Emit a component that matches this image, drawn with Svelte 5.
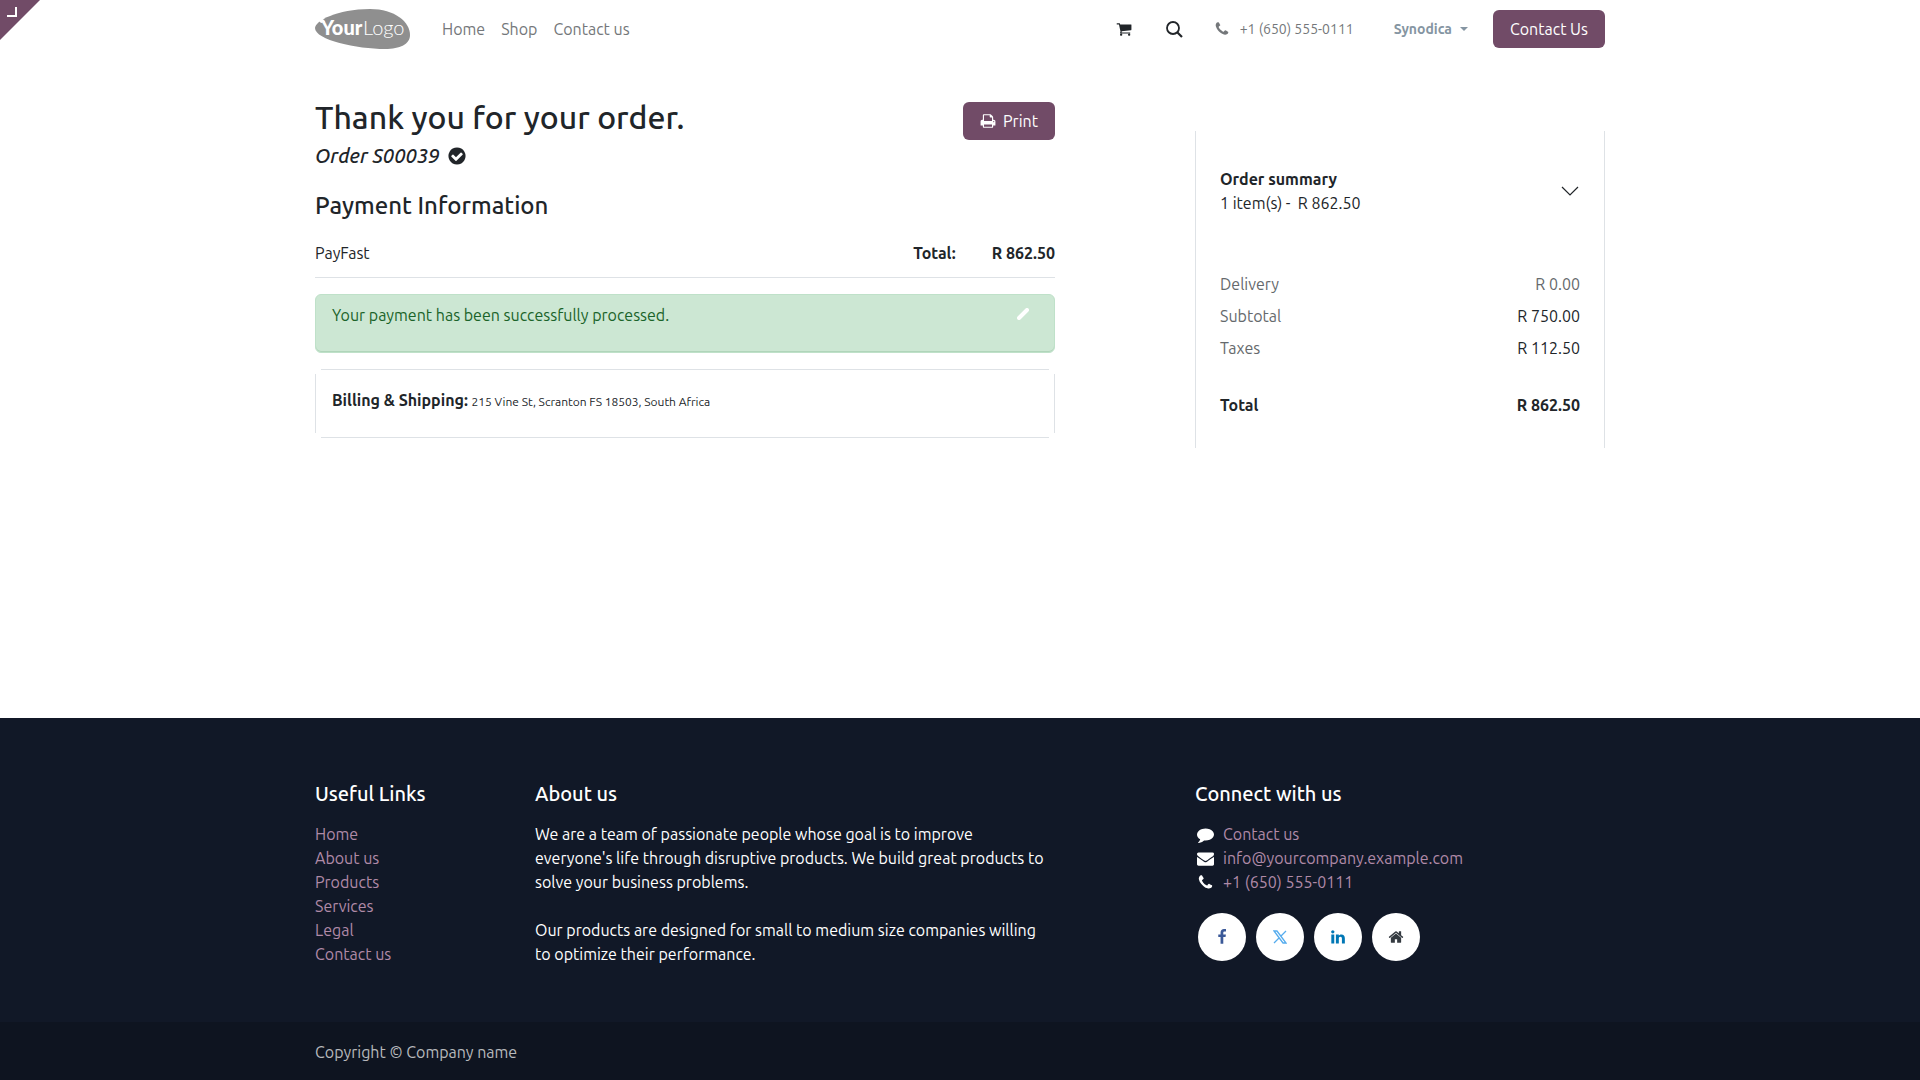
<script>
  const navLinks = ['Home', 'Shop', 'Contact us'];
  const usefulLinks = ['Home', 'About us', 'Products', 'Services', 'Legal', 'Contact us'];

  const icons = {
    cart: 'M704 1536q0 52-38 90t-90 38-90-38-38-90 38-90 90-38 90 38 38 90zm896 0q0 52-38 90t-90 38-90-38-38-90 38-90 90-38 90 38 38 90zm128-1088v512q0 24-16.5 42.5t-40.5 21.5l-1044 122q13 60 13 70 0 16-24 64h920q26 0 45 19t19 45-19 45-45 19h-1024q-26 0-45-19t-19-45q0-11 8-31.5t16-36 21.5-40 15.5-29.5l-177-823h-204q-26 0-45-19t-19-45 19-45 45-19h256q16 0 28.5 6.5t19.5 15.5 13 24.5 8 26 5.5 29.5 4.5 26h1201q26 0 45 19t19 45z',
    phone: 'M1600 1240q0 27-10 70.5t-21 68.5q-21 50-122 106-94 51-186 51-27 0-53-3.5t-57.5-12.5-47-14.5-55.5-20.5-49-18q-98-35-175-83-127-79-264-216t-216-264q-48-77-83-175-3-9-18-49t-20.5-55.5-14.5-47-12.5-57.5-3.5-53q0-92 51-186 56-101 106-122 25-11 68.5-21t70.5-10q14 0 21 3 18 6 53 76 11 19 30 54t35 63.5 31 53.5q3 4 17.5 25t21.5 35.5 7 28.5q0 20-28.5 50t-62 55-62 53-28.5 46q0 9 5 22.5t8.5 20.5 14 24 11.5 19q76 137 174 235t235 174q2 1 19 11.5t24 14 20.5 8.5 22.5 5q18 0 46-28.5t53-62 55-62 50-28.5q14 0 28.5 7t35.5 21.5 25 17.5q25 15 53.5 31t63.5 35 54 30q70 35 76 53 3 7 3 21z',
    print: 'M448 1536h896v-256h-896v256zm0-640h896v-384h-160q-40 0-68-28t-28-68v-160h-640v640zm1152 64q0-26-19-45t-45-19-45 19-19 45 19 45 45 19 45-19 19-45zm128 0v416q0 13-9.5 22.5t-22.5 9.5h-224v160q0 40-28 68t-68 28h-960q-40 0-68-28t-28-68v-160h-224q-13 0-22.5-9.5t-9.5-22.5v-416q0-79 56.5-135.5t135.5-56.5h64v-544q0-40 28-68t68-28h672q40 0 88 20t76 48l152 152q28 28 48 76t20 88v256h64q79 0 135.5 56.5t56.5 135.5z',
    check: 'M1412 734q0-28-18-46l-91-90q-19-19-45-19t-45 19l-408 407-226-226q-19-19-45-19t-45 19l-91 90q-18 18-18 46 0 27 18 45l362 362q19 19 45 19 27 0 46-19l543-543q18-18 18-45zm252 162q0 209-103 385.5t-279.5 279.5-385.5 103-385.5-103-279.5-279.5-103-385.5 103-385.5 279.5-279.5 385.5-103 385.5 103 279.5 279.5 103 385.5z',
    comment: 'M1792 896q0 174-120 321.5t-326 233-450 85.5q-70 0-145-8-198 175-460 242-49 14-114 22-17 2-30.5-9t-17.5-29v-1q-3-4-.5-12t2-10 4.5-9.5l6-9 7-8.5 8-9q7-8 31-34.5t34.5-38 31-39.5 32.5-51 27-59 26-76q-157-89-247.5-220t-90.5-281q0-130 71-248.5t191-204.5 286-136.5 348-50.5q244 0 450 85.5t326 233 120 321.5z',
    envelope: 'M1792 710v794q0 66-47 113t-113 47h-1472q-66 0-113-47t-47-113v-794q44 49 101 87 362 246 497 345 57 42 92.5 65.5t94.5 48 110 24.5h2q51 0 110-24.5t94.5-48 92.5-65.5q170-123 498-345 57-39 100-87zm0-294q0 79-49 151t-122 123q-376 261-468 325-10 7-42.5 31t-54 38.5-52 32.5-57.5 27-50 9h-2q-23 0-50-9t-57.5-27-52-32.5-54-38.5-42.5-31q-91-64-262-182.5t-205-142.5q-62-42-117-115.5t-55-136.5q0-78 41.5-130t118.5-52h1472q65 0 112.5 47t47.5 113z',
    facebook: 'M1343 12v264h-157q-86 0-116 36t-30 108v189h293l-39 296h-254v759h-306v-759h-255v-296h255v-218q0-186 104-288.5t277-102.5q147 0 228 12z',
    linkedin: 'M477 625v991h-330v-991h330zm21-306q1 73-50.5 122t-135.5 49h-2q-82 0-132-49t-50-122q0-74 51.5-122.5t134.5-48.5 133 48.5 51 122.5zm1166 729v568h-329v-530q0-105-40.5-164.5t-126.5-59.5q-63 0-105.5 34.5t-63.5 85.5q-11 30-11 81v553h-329q2-399 2-647t-1-296l-1-48h329v144h-2q20-32 41-56t56.5-52 87-43.5 114.5-15.5q171 0 275 113.5t104 332.5z',
    home: 'M1472 992v480q0 26-19 45t-45 19h-384v-384h-256v384h-384q-26 0-45-19t-19-45v-480q0-1 .5-3t.5-3l575-474 575 474q1 2 1 6zm223-69l-62 74q-8 9-21 11h-3q-13 0-21-7l-692-577-692 577q-12 8-24 7-13-2-21-11l-62-74q-8-10-7-23.5t11-21.5l719-599q32-26 76-26t76 26l244 204v-195q0-14 9-23t23-9h192q14 0 23 9t9 23v408l219 182q10 8 11 21.5t-7 23.5z'
  };
</script>

{#snippet icon(name, size = 16)}
  <svg class="icon" width={size} height={size} viewBox="0 0 1792 1792" aria-hidden="true">
    <path d={icons[name]} fill="currentColor" />
  </svg>
{/snippet}

<div class="page">
  <a href="#backend" class="corner" aria-label="Go to backend">
    <svg width="40" height="40" viewBox="0 0 40 40">
      <path d="M0 0H40L0 40z" fill="#714b67" />
      <path d="M7 16H16V7" fill="none" stroke="#fff" stroke-width="2" />
    </svg>
  </a>

  <header class="container">
    <a href="#home" class="logo" aria-label="Your Logo">
      <svg width="95" height="40" viewBox="0 0 95 40">
        <path d="M0 19C0 12 22 0 55 0C80 0 95 13 95 26C95 35 85 40 70 40C42 40 0 31 0 19z" fill="#8f8f8f" />
        <path d="M3 11l5-1 2 3-4 1z" fill="#fff" />
        <text x="6" y="26" font-size="20" font-weight="900" fill="#fff">Your</text>
        <text x="48" y="26" font-size="20" font-weight="300" fill="#fff">Logo</text>
      </svg>
    </a>
    <nav>
      {#each navLinks as link}
        <a href="#{link}">{link}</a>
      {/each}
    </nav>
    <a href="#cart" class="tool" aria-label="Cart">{@render icon('cart')}</a>
    <button class="tool search" aria-label="Search">
      <svg width="17" height="17" viewBox="0 0 17 17" fill="none" stroke="currentColor">
        <circle cx="7" cy="7" r="6" stroke-width="1.8" />
        <path d="M11 11l5 5" stroke-width="2.2" />
      </svg>
    </button>
    <a href="#call" class="call">{@render icon('phone')}<span>+1 (650) 555-0111</span></a>
    <button class="user">Synodica <span class="caret"></span></button>
    <a href="#contact" class="btn">Contact Us</a>
  </header>

  <main class="container columns">
    <div class="order">
      <div class="heading">
        <div>
          <h1>Thank you for your order.</h1>
          <p class="order-name"><em>Order S00039</em> {@render icon('check', 20)}</p>
        </div>
        <button class="btn print">{@render icon('print')}Print</button>
      </div>

      <h2>Payment Information</h2>
      <div class="payment">
        <span>PayFast</span>
        <strong class="label">Total:</strong>
        <strong>R 862.50</strong>
      </div>

      <div class="alert" role="status">
        <span>Your payment has been successfully processed.</span>
        <button class="edit" aria-label="Edit">
          <svg width="12" height="12" viewBox="0 0 12 12">
            <path d="M2 10L10 2" stroke="#fff" stroke-width="4" stroke-linecap="round" />
          </svg>
        </button>
      </div>

      <div class="address card">
        <strong>Billing &amp; Shipping:</strong>
        <small>215 Vine St, Scranton FS 18503, South Africa</small>
      </div>
    </div>

    <aside class="summary card">
      <button class="toggle">
        <span><strong>Order summary</strong><br>1 item(s) -&nbsp; R 862.50</span>
        <svg width="18" height="10" viewBox="0 0 18 10" fill="none" stroke="currentColor" stroke-width="1.2">
          <path d="M1 1l8 8 8-8" />
        </svg>
      </button>
      <table>
        <tbody>
          <tr class="muted"><th>Delivery</th><td>R 0.00</td></tr>
          <tr><th>Subtotal</th><td>R 750.00</td></tr>
          <tr><th>Taxes</th><td>R 112.50</td></tr>
          <tr class="total"><th>Total</th><td>R 862.50</td></tr>
        </tbody>
      </table>
    </aside>
  </main>

  <footer>
    <div class="container columns">
      <section>
        <h3>Useful Links</h3>
        <ul>
          {#each usefulLinks as link}
            <li><a href="#{link}">{link}</a></li>
          {/each}
        </ul>
      </section>
      <section class="about">
        <h3>About us</h3>
        <p>
          We are a team of passionate people whose goal is to improve<br>
          everyone's life through disruptive products. We build great products to
          solve your business problems.
        </p>
        <p>
          Our products are designed for small to medium size companies willing
          to optimize their performance.
        </p>
      </section>
      <section class="connect">
        <h3>Connect with us</h3>
        <ul>
          <li>{@render icon('comment', 17)}<a href="#contact">Contact us</a></li>
          <li>{@render icon('envelope', 17)}<a href="#mail">info@yourcompany.example.com</a></li>
          <li>{@render icon('phone', 17)}<a href="#call">+1 (650) 555-0111</a></li>
        </ul>
        <div class="social">
          <a href="#facebook" class="facebook" aria-label="Facebook">{@render icon('facebook')}</a>
          <a href="#x" class="x" aria-label="X">
            <svg width="14" height="14" viewBox="0 0 14 14" fill="none" stroke="currentColor" stroke-width="1.3">
              <path d="M1 1H4L13 13H10zM13 1L8 6M6 8L1 13" />
            </svg>
          </a>
          <a href="#linkedin" class="linkedin" aria-label="LinkedIn">{@render icon('linkedin')}</a>
          <a href="#home" class="home" aria-label="Home">{@render icon('home')}</a>
        </div>
      </section>
    </div>
    <div class="copyright">
      <div class="container">Copyright © Company name</div>
    </div>
  </footer>
</div>

<style>
  :global(body) {
    margin: 0;
  }

  .page {
    display: flex;
    flex-direction: column;
    min-height: 100vh;
    background: #fff;
    color: #212529;
    font: 16px/24px Ubuntu, 'Open Sans', 'Noto Sans', sans-serif;
  }

  .container {
    box-sizing: border-box;
    width: 100%;
    max-width: 1320px;
    margin: 0 auto;
    padding: 0 15px;
  }

  .columns {
    display: grid;
    grid-template-columns: repeat(12, minmax(0, 1fr));
    column-gap: 30px;
  }

  a {
    color: inherit;
    text-decoration: none;
  }

  button {
    padding: 0;
    border: 0;
    background: none;
    color: inherit;
    font: inherit;
    text-align: left;
    cursor: pointer;
  }

  h1, h2, h3, p, ul {
    margin: 0;
    padding: 0;
    font-weight: 500;
  }

  p, ul {
    font-weight: 400;
    list-style: none;
  }

  strong {
    font-weight: 700;
  }

  svg {
    display: block;
    flex: none;
  }

  .corner {
    position: absolute;
    top: 0;
    left: 0;
  }

  header {
    display: flex;
    align-items: center;
    height: 58px;
  }

  .logo {
    margin-right: 32px;
    font-family: Lato, sans-serif;
  }

  nav {
    display: flex;
    flex: 1;
    gap: 16px;
    color: #74777a;
  }

  .tool {
    margin-right: 34px;
  }

  .search {
    margin-right: 31px;
  }

  .call {
    display: flex;
    align-items: center;
    gap: 10px;
    margin-right: 40px;
    color: #74777a;
    font-size: 14px;
  }

  .user {
    display: flex;
    align-items: center;
    gap: 8px;
    margin-right: 25px;
    color: #8595a2;
    font-size: 14px;
    font-weight: 700;
  }

  .caret {
    border: 4px solid transparent;
    border-top-color: currentColor;
    border-bottom: 0;
  }

  .btn {
    padding: 7px 17px;
    border-radius: 6px;
    background: #714b67;
    color: #fff;
  }

  .order {
    grid-column: span 7;
    padding-top: 39px;
  }

  .heading {
    display: flex;
    align-items: flex-start;
    justify-content: space-between;
  }

  h1 {
    font-size: 32px;
    line-height: 40px;
  }

  .order-name {
    display: flex;
    align-items: center;
    gap: 7px;
    height: 38px;
    font-size: 20px;
    font-weight: 500;
  }

  .print {
    display: flex;
    align-items: center;
    gap: 7px;
    margin-top: 5px;
  }

  h2 {
    margin-top: 16px;
    font-size: 24px;
    line-height: 30px;
  }

  .payment {
    display: flex;
    margin-top: 20px;
    padding-bottom: 12px;
    border-bottom: 1px solid #dee2e6;
  }

  .label {
    margin: 0 36px 0 auto;
  }

  .alert {
    display: flex;
    align-items: flex-start;
    justify-content: space-between;
    box-sizing: border-box;
    height: 59px;
    margin-top: 16px;
    padding: 8px 25px 8px 16px;
    border: 1px solid #bfe1c9;
    border-radius: 6px;
    background: #cce7d3;
    box-shadow: inset 0 -1px #b0d5ba;
    color: #1a6329;
  }

  .edit {
    margin-top: 5px;
  }

  /* the border strokes stop short of the corners */
  .card {
    position: relative;
  }

  .card::before {
    content: '';
    position: absolute;
    inset: 5px 0;
    border: solid #dee2e6;
    border-width: 0 1px;
    pointer-events: none;
  }

  .address {
    margin-top: 16px;
    padding: 19px 17px 24px;
  }

  .address::after {
    content: '';
    position: absolute;
    inset: 0 6px;
    border: solid #dee2e6;
    border-width: 1px 0;
    pointer-events: none;
  }

  small {
    font-size: 12px;
  }

  .summary {
    grid-column: 9 / span 4;
    align-self: start;
    margin-top: 68px;
    padding: 41px 25px 32px;
  }

  .toggle {
    display: flex;
    align-items: center;
    justify-content: space-between;
    width: 100%;
    padding-right: 1px;
    box-sizing: border-box;
  }

  table {
    width: 100%;
    margin-top: 53px;
    border-collapse: collapse;
  }

  th, td {
    padding: 4px 0;
    font-weight: 400;
    text-align: left;
  }

  td {
    text-align: right;
  }

  th, .muted td {
    color: #65696c;
  }

  .total th, .total td {
    padding-top: 29px;
    color: #212529;
    font-weight: 700;
  }

  footer {
    margin-top: auto;
    background: #111827;
    color: #fff;
  }

  footer .columns {
    padding-top: 64px;
    padding-bottom: 56px;
  }

  footer section {
    grid-column: span 2;
  }

  footer .about {
    grid-column: span 5;
  }

  footer .connect {
    grid-column: 9 / span 4;
  }

  h3 {
    margin-bottom: 16px;
    font-size: 20px;
    line-height: 24px;
  }

  .about p + p {
    margin-top: 24px;
  }

  li {
    display: flex;
    align-items: center;
    gap: 9px;
  }

  .connect li {
    padding-left: 2px;
  }

  li a {
    color: #b08aa7;
  }

  .social {
    display: flex;
    gap: 10px;
    margin-top: 19px;
    padding-left: 3px;
  }

  .social a {
    display: flex;
    align-items: center;
    justify-content: center;
    width: 48px;
    height: 48px;
    border-radius: 50%;
    background: #fff;
  }

  .facebook {
    color: #3b5998;
  }

  .x {
    color: #55acee;
  }

  .linkedin {
    color: #0077b5;
  }

  .home {
    color: #343a40;
  }

  .copyright {
    padding: 18px 0 16px;
    background: #0e1420;
    color: #b7b9bc;
  }
</style>
